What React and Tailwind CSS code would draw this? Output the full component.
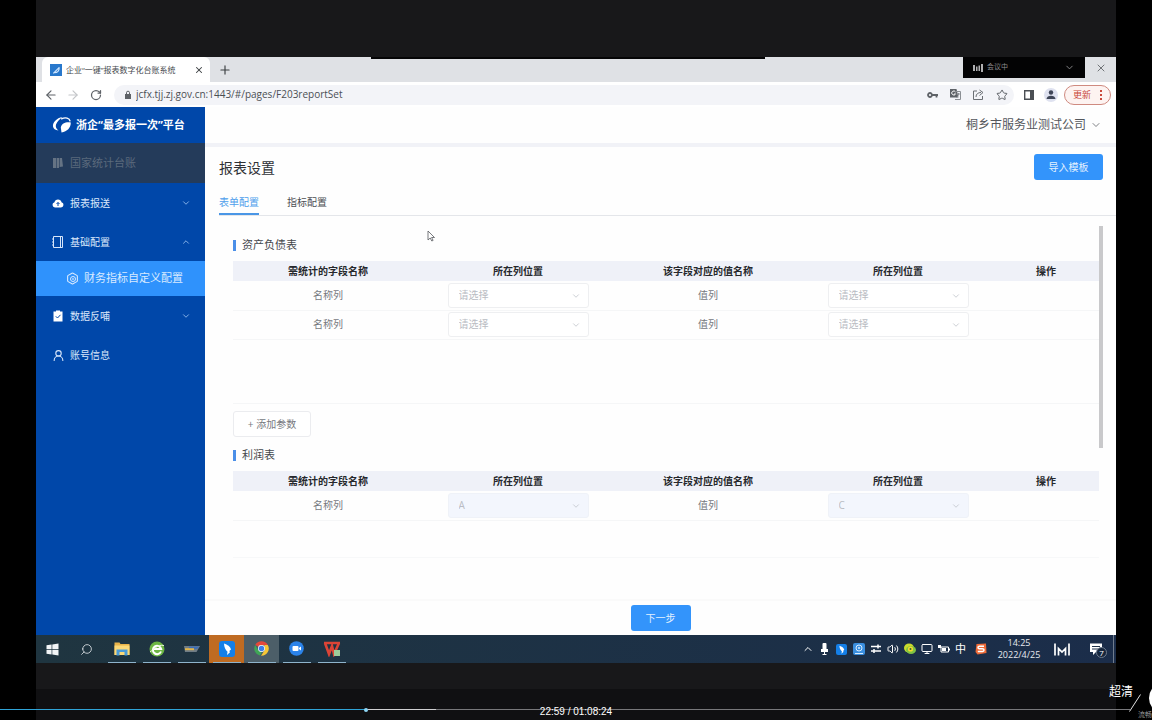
import React, { useState } from 'react';
import {
    ArrowLeft,
    ArrowRight,
    RotateCw,
    Star,
    X,
    Plus,
    ChevronDown,
    ChevronUp,
    Search,
    Hexagon,
    UserRound,
    Volume2,
    Monitor,
} from 'lucide-react';

const COLUMNS = ['需统计的字段名称', '所在列位置', '该字段对应的值名称', '所在列位置', '操作'];

const BALANCE_ROWS = [
    { id: 1, name: '名称列', value: '值列' },
    { id: 2, name: '名称列', value: '值列' },
];

const PROFIT_ROWS = [{ id: 1, name: '名称列', value: '值列', nameCol: 'A', valueCol: 'C' }];

/* ---------- icons ---------- */

function LogoMark() {
    return (
        <svg width="20" height="18" viewBox="0 0 20 18" fill="none">
            <path d="M10.500 1C4.500 2 .5 6.500 1 10.500c.3 2.300 2.300 3.600 5.500 4C4.300 13 3.300 10.800 4 8.500 5.300 5.300 8 3 10.500 1z" fill="#fff" />
            <path d="M9.500 2.800c4-1.800 8-.800 8.500 2" stroke="#fff" strokeWidth="1.400" strokeLinecap="round" />
            <path d="M18.800 6.500C14 5.600 9.500 7.500 8.800 11.500l.7 5c5.600-1 9.300-4.500 9.300-10z" fill="#fff" />
        </svg>
    );
}

function BookIcon() {
    return (
        <svg width="12" height="12" viewBox="0 0 12 12" fill="#657384">
            <path d="M1 1h3v10H1zM4.600 1H7v10H4.600zM7.600 1H10l1 8.500-3.400.5z" />
        </svg>
    );
}

function CloudIcon() {
    return (
        <svg width="12" height="12" viewBox="0 0 12 12">
            <path d="M3 10.500A2.700 2.700 0 0 1 2.500 5.200a3.600 3.600 0 0 1 7 0A2.700 2.700 0 0 1 9 10.500z" fill="#fff" />
            <path d="M6 9V5.500M4.500 7 6 5.500 7.500 7" stroke="#0047a9" fill="none" />
        </svg>
    );
}

function NotebookIcon() {
    return (
        <svg width="12" height="12" viewBox="0 0 12 12" fill="none" stroke="#d7e5fa">
            <path d="M1.500.500h9v11h-9zM8.500.500v11M0 3h2M0 6h2M0 9h2" />
        </svg>
    );
}

function GearIcon() {
    return (
        <span className="grid place-items-center">
            <Hexagon size={13} color="#d9eaff" className="col-start-1 row-start-1" />
            <svg width="12" height="12" viewBox="0 0 12 12" className="col-start-1 row-start-1" fill="none" stroke="#d9eaff">
                <circle cx="6" cy="6" r="2.500" />
                <circle cx="6" cy="6" r=".500" />
            </svg>
        </span>
    );
}

function ClipboardIcon() {
    return (
        <svg width="12" height="12" viewBox="0 0 12 12">
            <path d="M1.500 1.500h2.500V.500h4v1h2.500v10h-9z" fill="#fff" />
            <path d="m3.800 6.300 1.700 1.700 3-3.200" stroke="#0047a9" fill="none" />
        </svg>
    );
}

function LockIcon() {
    return (
        <svg width="8" height="10" viewBox="0 0 8 10">
            <path d="M1 4h6v5H1z" fill="#5f6368" />
            <path d="M2.500 4V2.700a1.500 1.500 0 0 1 3 0V4" fill="none" stroke="#5f6368" />
        </svg>
    );
}

function WindowsIcon() {
    return (
        <svg width="13" height="13" viewBox="0 0 13 13" fill="#f2f5f7">
            <path d="M.500 2.200 5.600 1.500V6.100H.500zM6.300 1.400 12.500.500v5.600H6.300zM.500 6.800h5.100v4.700L.500 10.800zM6.300 6.800h6.200v5.700l-6.200-.9z" />
        </svg>
    );
}

function FolderIcon() {
    return (
        <svg width="18" height="16" viewBox="0 0 18 16">
            <path d="M1.500 1.500h5l1 1.500h9v11h-15z" fill="#e9b44a" />
            <path d="M1.500 4.500h15V14h-15z" fill="#fbd978" />
            <path d="M3.500 8.500h11V14.500h-3V11h-5v3.500h-3z" fill="#4a9bd8" />
        </svg>
    );
}

function BrowserEIcon() {
    return (
        <svg width="16" height="16" viewBox="0 0 16 16">
            <circle cx="8" cy="8" r="7.500" fill="#6cb644" />
            <path d="M12 10.500A4.200 4.200 0 1 1 12.200 8H4" stroke="#fff" strokeWidth="2" fill="none" />
            <path d="M1 11C4 9 9 3 15 4.500" stroke="#e8f6d8" fill="none" />
        </svg>
    );
}

function LaptopIcon() {
    return (
        <svg width="18" height="10" viewBox="0 0 18 10">
            <path d="M1 2h16L13.500 8H2z" fill="#6f7c85" />
            <path d="M6 2.500h10.500L14 5H6z" fill="#3f6fb4" />
            <path d="M2 4.200h9v2H2z" fill="#e0b54c" />
        </svg>
    );
}

function BirdIcon({ size }) {
    return (
        <svg width={size} height={size} viewBox="0 0 16 16">
            <rect width="16" height="16" rx="3" fill="#147fe8" />
            <path d="M5 2.500c3.500 1 6.500 3.300 7 6L10.300 10l.7 1.200L8 14l.5-3.300C6.500 9 5 6 5 2.500z" fill="#fff" />
        </svg>
    );
}

function ChromeIcon() {
    return (
        <svg width="15" height="15" viewBox="0 0 16 16">
            <path d="M8 .300a7.700 7.700 0 0 1 6.700 3.900H8L4.700 6 1.300 4.200A7.700 7.700 0 0 1 8 .300z" fill="#e5483a" />
            <path d="M1.300 4.200 4.700 10l3.600 1.900-2 3.600A7.700 7.700 0 0 1 1.300 4.200z" fill="#3fa656" />
            <path d="M14.700 4.200A7.700 7.700 0 0 1 7.500 15.700L11.300 9.900 11 4.200z" fill="#f7c735" />
            <circle cx="8" cy="8" r="3.700" fill="#fff" />
            <circle cx="8" cy="8" r="2.900" fill="#3f7fe8" />
        </svg>
    );
}

function MeetingIcon() {
    return (
        <svg width="15" height="15" viewBox="0 0 15 15">
            <circle cx="7.500" cy="7.500" r="7.300" fill="#2b83ea" />
            <rect x="3.500" y="5" width="6" height="5" rx="1" fill="#fff" />
            <path d="m10 7 2-1.500v4L10 8z" fill="#fff" />
        </svg>
    );
}

function WpsIcon() {
    return (
        <svg width="18" height="16" viewBox="0 0 18 16">
            <path d="M1 2h16M2 2l4 11L9 5l2 8 5-11" stroke="#dc4436" strokeWidth="2.600" fill="none" />
            <rect x="11" y="9" width="6" height="6" fill="#9ccb9b" />
        </svg>
    );
}

function MicIcon() {
    return (
        <svg width="9" height="12" viewBox="0 0 9 12" fill="#fff">
            <rect x="2.500" width="4" height="8" rx="1" />
            <path d="M1 6v3h7V6M4 9h1v2H4zM2.500 11h4v1h-4z" />
        </svg>
    );
}

function AppTrayIcon() {
    return (
        <svg width="12" height="12" viewBox="0 0 12 12">
            <rect width="12" height="12" rx="2" fill="#3a8fe0" />
            <circle cx="6" cy="5" r="3" fill="none" stroke="#d9ecff" />
            <path d="M2 10.500h8" stroke="#d9ecff" />
            <circle cx="6" cy="5" r="1" fill="#d9ecff" />
        </svg>
    );
}

function SwapIcon() {
    return (
        <svg width="12" height="10" viewBox="0 0 12 10" fill="none" stroke="#fff" strokeWidth="1.500">
            <path d="M1 2.500h10M1 7h10M8 .500v4M4 5v4" />
        </svg>
    );
}

function DiskIcon() {
    return (
        <svg width="12" height="12" viewBox="0 0 12 12">
            <ellipse cx="5" cy="5" rx="5" ry="4.500" fill="#c9dc2c" />
            <ellipse cx="7" cy="7" rx="5" ry="4" fill="#7fc242" />
            <circle cx="6.500" cy="6" r="2.600" fill="#f3d92e" />
            <circle cx="6.500" cy="6" r="1" fill="#39692a" />
        </svg>
    );
}

function BatteryIcon() {
    return (
        <svg width="12" height="10" viewBox="0 0 12 10">
            <path d="M3 3h7.500v5H3z" fill="none" stroke="#fff" />
            <path d="M4 4h4v3H4zM11 4.500h1v2h-1zM0 1h3v3H0z" fill="#fff" />
        </svg>
    );
}

function SogouIcon() {
    return (
        <svg width="12" height="12" viewBox="0 0 12 12">
            <path d="M1.500 1 11 .500l.5 9.500-9 1.500L.500 9z" fill="#ee6a37" />
            <path d="M9 3.200H4.500c-2 0-2 2.500 0 2.500h3c2 0 2 2.800 0 2.800H2.800" stroke="#fff" strokeWidth="1.500" fill="none" />
        </svg>
    );
}

function MdaIcon() {
    return (
        <svg width="16" height="13" viewBox="0 0 16 13" fill="none" stroke="#fff" strokeWidth="1.700">
            <path d="M1 .500v12M15 .500v12M4.500 12.500V5.500L8 9l3.500-3.500v7" />
        </svg>
    );
}

function NoticeIcon() {
    return (
        <svg width="12" height="12" viewBox="0 0 12 12">
            <path d="M0 .500h12V9H6l-3 3V9H0z" fill="#fff" />
            <path d="M2 3.500h8M2 6h8" stroke="#1c2f48" />
        </svg>
    );
}

/* ---------- browser chrome ---------- */

function TabStrip() {
    return (
        <div className="flex h-[25px] bg-[#dfe1e5] pl-1.5">
            <div className="flex w-[168px] items-center rounded-t-md bg-white px-1.5">
                <svg width="12" height="12" viewBox="0 0 11 11" className="ml-0.5 shrink-0">
                    <rect width="11" height="11" fill="#2878cc" />
                    <path d="M3 8.500 8.500 3M4 8c3 0 4.500-2 4.500-5" stroke="#cfe6ff" fill="none" />
                </svg>
                <span className="ml-1 flex-1 whitespace-nowrap text-[8px] text-[#45494d]">企业“一键”报表数字化台账系统</span>
                <button type="button" aria-label="关闭标签页" className="text-[#3c4043]">
                    <X size={10} strokeWidth={2.5} />
                </button>
            </div>
            <button type="button" aria-label="新标签页" className="ml-2 text-[#3c4043]">
                <Plus size={14} />
            </button>
            <div className="mb-1 ml-auto flex w-[122px] items-center bg-[#030304] px-2.5 text-[#8c8c8e]">
                <svg width="10" height="8" viewBox="0 0 10 8" fill="#b0b0b2">
                    <path d="M0 1h2v6H0zM3 2.500h1.500V7H3zM5.500 1.500H7V7H5.500zM8 0h2v8H8z" />
                </svg>
                <span className="ml-1 flex-1 text-[7px]">会议中</span>
                <ChevronDown size={11} />
            </div>
            <button type="button" aria-label="关闭窗口" className="flex w-[31px] items-center justify-center pb-1 text-[#4b4e52]">
                <X size={12} strokeWidth={1.5} />
            </button>
        </div>
    );
}

function AddressBar() {
    return (
        <div className="flex h-[25px] items-center bg-white pr-[5px] pl-2 text-[#5f6368]">
            <button type="button" aria-label="后退" className="flex w-[22px]">
                <ArrowLeft size={14} />
            </button>
            <button type="button" aria-label="前进" className="flex w-[22px] text-[#c4c6c9]">
                <ArrowRight size={14} />
            </button>
            <button type="button" aria-label="刷新" className="flex w-[22px] pl-0.5">
                <RotateCw size={12} strokeWidth={2.5} />
            </button>
            <div className="ml-1 flex h-5 flex-1 items-center rounded-full bg-[#f3f4f8] pr-1.5 pl-2.5">
                <LockIcon />
                <input
                    type="text"
                    aria-label="地址"
                    defaultValue="jcfx.tjj.zj.gov.cn:1443/#/pages/F203reportSet"
                    className="ml-1 min-w-0 flex-1 bg-transparent text-[10px] text-[#4b4f54] outline-none"
                />
                <div className="flex items-center gap-3">
                    <svg width="11" height="8" viewBox="0 0 11 8" fill="none" stroke="#5f6368" strokeWidth="1.800">
                        <circle cx="3" cy="4" r="2" />
                        <path d="M5 4h6M9.500 4v2.500" />
                    </svg>
                    <svg width="11" height="11" viewBox="0 0 11 11">
                        <path d="M0 0h6.500l2 8.500H0z" fill="#5f6368" />
                        <path d="M6 2.500h4.500v8H5M6.500 5H10M8.500 4v1c0 2-1.500 3-2 3.500" fill="none" stroke="#8b8f94" />
                        <path d="M5.500 3A2 2 0 1 0 5.500 5H4" fill="none" stroke="#fff" />
                    </svg>
                    <svg width="11" height="11" viewBox="0 0 11 11" fill="none" stroke="#6b6f74">
                        <path d="M4 2H.500v8.500h9V7M3 8c0-3 2-4.500 5-4.500M6.500 1 10 3.500l-3.500 3" />
                    </svg>
                    <Star size={12} />
                </div>
            </div>
            <svg width="10" height="10" viewBox="0 0 10 10" className="ml-2.5">
                <path d="M.700.700h8.600v8.600H.700z" fill="none" stroke="#4b4f54" strokeWidth="1.400" />
                <path d="M6 1h3v8H6z" fill="#4b4f54" />
            </svg>
            <svg width="14" height="14" viewBox="0 0 14 14" className="ml-2.5">
                <circle cx="7" cy="7" r="7" fill="#dfe2f0" />
                <circle cx="7" cy="4.500" r="2.200" fill="#3f4658" />
                <path d="M2.500 11c0-4.500 9-4.500 9 0z" fill="#3f4658" />
            </svg>
            <button
                type="button"
                className="ml-1.5 flex h-5 w-[47px] items-center justify-between rounded-full border border-[#cf8a80] bg-[#fdf3f1] px-2 text-[9px] text-[#c9493b]"
            >
                更新
                <svg width="2" height="10" viewBox="0 0 2 10" fill="#c9493b">
                    <path d="M0 0h2v2H0zM0 4h2v2H0zM0 8h2v2H0z" />
                </svg>
            </button>
        </div>
    );
}

/* ---------- sidebar ---------- */

function MenuItem({ icon, label, open, expandable }) {
    return (
        <a href="#" className="flex h-[39px] items-center pt-px pr-3.5 pl-4 text-[10px] text-[#dbe8fb]">
            <span className="flex w-[18px]">{icon}</span>
            <span className="flex-1">{label}</span>
            {expandable && (open ? <ChevronUp size={10} color="#9cc3f2" /> : <ChevronDown size={10} color="#9cc3f2" />)}
        </a>
    );
}

function Sidebar() {
    return (
        <aside className="w-[169px] shrink-0 bg-[#0047a9]">
            <div className="flex h-9 items-center gap-1 pl-4 text-[11px] font-bold whitespace-nowrap text-white">
                <LogoMark />
                浙企“最多报一次”平台
            </div>
            <nav>
                <a href="#" className="flex h-10 items-center bg-[#243b5a] pl-4 text-[11px] text-[#5a697c]">
                    <span className="flex w-[18px]"><BookIcon /></span>
                    国家统计台账
                </a>
                <MenuItem icon={<CloudIcon />} label="报表报送" expandable />
                <MenuItem icon={<NotebookIcon />} label="基础配置" expandable open />
                <a href="#" className="flex h-[35px] items-center bg-[#2f92fc] pl-[30px] text-[11px] text-[#d9eaff]">
                    <span className="flex w-[18px]"><GearIcon /></span>
                    财务指标自定义配置
                </a>
                <MenuItem icon={<ClipboardIcon />} label="数据反哺" expandable />
                <MenuItem icon={<UserRound size={13} />} label="账号信息" />
            </nav>
        </aside>
    );
}

/* ---------- content ---------- */

function ColumnSelect({ label, value }) {
    const disabled = Boolean(value);
    return (
        <div className="relative mx-auto w-[141px]">
            <select
                aria-label={label}
                disabled={disabled}
                defaultValue={value || ''}
                className="block h-[25px] w-full appearance-none rounded-[3px] border border-[#eeeff1] bg-white pl-2.5 text-[10px] text-[#b9bcc3] disabled:border-[#eff2f8] disabled:bg-[#f3f6fd] disabled:opacity-100"
            >
                <option value="">请选择</option>
                <option value="A">A</option>
                <option value="B">B</option>
                <option value="C">C</option>
            </select>
            <ChevronDown size={10} color="#c3c6cc" className="pointer-events-none absolute top-2 right-2" />
        </div>
    );
}

function ConfigTable({ title, rows }) {
    return (
        <>
            <h2 className="flex h-[31px] items-center text-[11px] text-[#45484d]">
                <span className="mr-1.5 h-[11px] w-[3px] bg-[#4b8fe8]" />
                {title}
            </h2>
            <table className="w-full table-fixed text-center text-[10px]">
                <colgroup>
                    <col className="w-[190px]" />
                    <col className="w-[190px]" />
                    <col className="w-[190px]" />
                    <col className="w-[190px]" />
                    <col />
                </colgroup>
                <thead>
                    <tr className="h-5 bg-[#eff1f8] text-[#26282c]">
                        {COLUMNS.map((col, i) => (
                            <th key={i} className="p-0 font-bold">{col}</th>
                        ))}
                    </tr>
                </thead>
                <tbody>
                    {rows.map((row) => (
                        <tr key={row.id} className="h-[29px] border-b border-[#f5f6f7] text-[#76797e]">
                            <td className="p-0">{row.name}</td>
                            <td className="p-0"><ColumnSelect label="名称所在列位置" value={row.nameCol} /></td>
                            <td className="p-0">{row.value}</td>
                            <td className="p-0"><ColumnSelect label="值所在列位置" value={row.valueCol} /></td>
                            <td className="p-0"></td>
                        </tr>
                    ))}
                </tbody>
            </table>
        </>
    );
}

function ReportSettings() {
    const [tab, setTab] = useState('form');
    const tabs = [
        { key: 'form', label: '表单配置' },
        { key: 'index', label: '指标配置' },
    ];

    return (
        <div className="flex min-w-0 flex-1 flex-col bg-[#fefefe]">
            <header className="flex h-10 items-center justify-end border-b-4 border-[#f1f2f7] pr-3.5">
                <button type="button" className="flex items-center gap-1 text-[12px] text-[#54575c]">
                    桐乡市服务业测试公司
                    <ChevronDown size={12} strokeWidth={1.5} />
                </button>
            </header>

            <div className="flex h-10 items-center justify-between pr-[13px] pl-3.5">
                <h1 className="text-[14px] text-[#303236]">报表设置</h1>
                <button type="button" className="h-[26px] w-[69px] rounded-[3px] bg-[#3394fb] text-[10px] text-[#e3f1ff]">
                    导入模板
                </button>
            </div>

            <div className="ml-3.5 flex h-[29px] gap-7 border-b border-[#e4e6ea] pt-1">
                {tabs.map((item) => (
                    <button
                        key={item.key}
                        type="button"
                        onClick={() => setTab(item.key)}
                        className={
                            tab === item.key
                                ? 'border-b-2 border-[#4a96e6] text-[10px] text-[#4f9fec]'
                                : 'border-b-2 border-transparent text-[10px] text-[#4c4f54]'
                        }
                    >
                        {item.label}
                    </button>
                ))}
            </div>

            <div className="flex flex-1 pt-2.5 pr-[13px] pl-7">
                <div className="flex min-w-0 flex-1 flex-col pt-1">
                    <section className="min-h-[174px] border-b border-[#f5f6f7]">
                        <ConfigTable title="资产负债表" rows={BALANCE_ROWS} />
                    </section>
                    <button
                        type="button"
                        className="mt-[7px] h-[26px] w-[78px] rounded-[3px] border border-[#ebecef] bg-white text-[10px] text-[#76797e]"
                    >
                        + 添加参数
                    </button>
                    <section className="mt-[3px] min-h-[118px] border-b border-[#f7f8f9]">
                        <ConfigTable title="利润表" rows={PROFIT_ROWS} />
                    </section>
                </div>
                <div className="h-[222px] w-1 bg-[#c9c9cb]" />
            </div>

            <footer className="flex justify-center border-t-2 border-[#fafafa] pt-1 pb-1">
                <button type="button" className="h-[26px] w-[60px] rounded-[3px] bg-[#3394fb] text-[10px] text-[#e3f1ff]">
                    下一步
                </button>
            </footer>
        </div>
    );
}

/* ---------- taskbar ---------- */

function TaskButton({ label, className, children }) {
    return (
        <button type="button" aria-label={label} className={`flex w-[35px] flex-col items-center ${className || ''}`}>
            <span className="flex flex-1 items-center">{children}</span>
            <span className="h-px w-7 bg-[#8fb4cc]" />
        </button>
    );
}

function TrayIcon({ children }) {
    return <span className="flex w-[17px] justify-center">{children}</span>;
}

function Taskbar() {
    return (
        <div className="flex h-7 bg-linear-to-r from-[#1f3540] to-[#1b2d4a]">
            <button type="button" aria-label="开始" className="flex w-[33px] items-center justify-center">
                <WindowsIcon />
            </button>
            <button type="button" aria-label="搜索" className="flex w-[35px] items-center justify-center text-[#e3e8eb]">
                <Search size={13} strokeWidth={1.5} className="-scale-x-100" />
            </button>
            <TaskButton label="文件资源管理器"><FolderIcon /></TaskButton>
            <TaskButton label="浏览器"><BrowserEIcon /></TaskButton>
            <TaskButton label="电脑"><LaptopIcon /></TaskButton>
            <TaskButton label="钉钉" className="bg-[#bf6b22]"><BirdIcon size={16} /></TaskButton>
            <TaskButton label="Chrome" className="bg-[#4c5e68]"><ChromeIcon /></TaskButton>
            <TaskButton label="会议"><MeetingIcon /></TaskButton>
            <TaskButton label="WPS"><WpsIcon /></TaskButton>

            <div className="mr-0.5 ml-auto flex items-center border-r border-[#6f7c8e] pl-4 text-white">
                <TrayIcon><ChevronUp size={12} /></TrayIcon>
                <TrayIcon><MicIcon /></TrayIcon>
                <TrayIcon><BirdIcon size={11} /></TrayIcon>
                <TrayIcon><AppTrayIcon /></TrayIcon>
                <TrayIcon><SwapIcon /></TrayIcon>
                <TrayIcon><Volume2 size={12} /></TrayIcon>
                <TrayIcon><DiskIcon /></TrayIcon>
                <TrayIcon><Monitor size={12} /></TrayIcon>
                <TrayIcon><BatteryIcon /></TrayIcon>
                <TrayIcon><span className="text-[11px]">中</span></TrayIcon>
                <span className="flex w-[23px] justify-center"><SogouIcon /></span>
                <div className="w-[54px] text-center text-[9px] leading-3 text-[#e6e9ee]">
                    <div>14:25</div>
                    <div>2022/4/25</div>
                </div>
                <span className="flex w-8 justify-center"><MdaIcon /></span>
                <span className="relative flex w-[35px] justify-center">
                    <NoticeIcon />
                    <span className="absolute top-1 left-[18px] flex size-[11px] items-center justify-center rounded-full border border-[#6f7c8e] bg-[#16263d] text-[8px] leading-none">
                        7
                    </span>
                </span>
            </div>
        </div>
    );
}

/* ---------- video player overlay ---------- */

function PlayerControls() {
    return (
        <div className="absolute inset-x-0 bottom-0 h-[40px] overflow-hidden font-['Liberation_Sans','Noto_Sans_CJK_SC',sans-serif] text-white">
            <div className="absolute right-[22px] bottom-[10px] left-0 flex h-px items-center bg-[#77777a]">
                <div className="h-px w-[32.4%] bg-[#2fa3d6]" />
                <div className="-ml-0.5 size-1 shrink-0 rounded-full bg-[#8ed6f5]" />
                <div className="h-px w-[6%] bg-[#d0d0d2]" />
            </div>
            <div className="absolute inset-x-0 bottom-0 text-center text-[10px] leading-4">22:59 / 01:08:24</div>
            <button type="button" className="absolute right-[19px] bottom-5 text-[12px] leading-4">超清</button>
            <svg width="12" height="18" viewBox="0 0 12 18" className="absolute right-[11px] bottom-[8px]" stroke="#e0e0e0">
                <path d="M.500 17.500 11.500.500" />
            </svg>
            <button type="button" className="absolute right-0 bottom-0 text-[7px] leading-[10px] text-[#98989a]">流畅</button>
            <span className="absolute bottom-[6px] left-full -ml-[3px] size-[32px] rounded-full bg-white" />
        </div>
    );
}

export default function App() {
    return (
        <div className="relative flex min-h-screen flex-col overflow-hidden bg-black px-9 font-['Open_Sans','Noto_Sans_CJK_SC',sans-serif]">
            <div className="flex h-[57px] items-end justify-center bg-[#18181a] pr-4">
                {/* edge of the meeting toolbar, hangs over the tab strip */}
                <div className="z-10 -mb-0.5 h-0.5 w-[37%] bg-[#050506]" />
            </div>
            <div className="flex flex-1 flex-col">
                <TabStrip />
                <AddressBar />
                <div className="flex flex-1">
                    <Sidebar />
                    <ReportSettings />
                </div>
                <Taskbar />
            </div>
            <div className="h-[26px] bg-[#18181a]" />
            <div className="h-[31px] bg-[#101012]" />

            {/* mouse pointer */}
            <svg width="8" height="12" viewBox="0 0 8 12" className="absolute top-[230px] left-[427px]">
                <path d="M1 1v9l2.200-2 1.600 3 1.300-.6L4.600 7.500H7.500z" fill="#fff" stroke="#55585d" strokeWidth=".8" />
            </svg>
            <PlayerControls />
        </div>
    );
}
